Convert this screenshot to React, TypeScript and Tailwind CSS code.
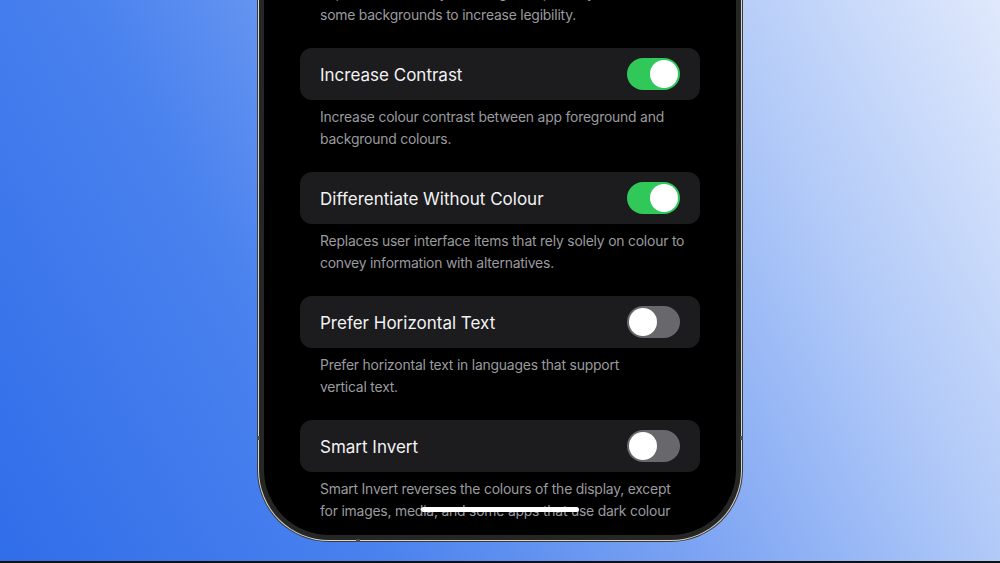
import { useState } from 'react'

type Row = {
  title: string
  footer: string[]
  on: boolean
}

const rows: Row[] = [
  {
    title: 'Increase Contrast',
    footer: ['Increase colour contrast between app foreground and', 'background colours.'],
    on: true
  },
  {
    title: 'Differentiate Without Colour',
    footer: ['Replaces user interface items that rely solely on colour to', 'convey information with alternatives.'],
    on: true
  },
  {
    title: 'Prefer Horizontal Text',
    footer: ['Prefer horizontal text in languages that support', 'vertical text.'],
    on: false
  },
  {
    title: 'Smart Invert',
    footer: ['Smart Invert reverses the colours of the display, except', 'for images, media, and some apps that use dark colour'],
    on: false
  }
]

function Toggle({ on, onChange }: { on: boolean; onChange: () => void }) {
  return (
    <button
      type="button"
      onClick={onChange}
      className={`flex h-[32px] w-[53px] shrink-0 items-center rounded-full p-[2px] ${on ? 'justify-end bg-[#31c85a]' : 'justify-start bg-[#67676c]'}`}
    >
      <span className="h-[28px] w-[28px] rounded-full bg-white" />
    </button>
  )
}

function Footer({ lines }: { lines: string[] }) {
  return (
    <div className="px-[20px] pt-[7px] text-[13.9px] leading-[21.5px] tracking-[-0.2px] text-[#9a9a9f]">
      {lines.map(line => (
        <p key={line} className="whitespace-nowrap">{line}</p>
      ))}
    </div>
  )
}

export default function App() {
  const [state, setState] = useState(rows.map(r => r.on))

  const flip = (i: number) => {
    setState(prev => prev.map((v, j) => (j === i ? !v : v)))
  }

  return (
    <div
      className="flex h-[563px] w-[1000px] flex-col overflow-hidden bg-[linear-gradient(62deg,#306de9_0%,#4a82ee_30%,#7ea5f3_55%,#b3cbf8_78%,#e0e9fc_100%)]"
      style={{ fontFamily: 'Inter, "Noto Sans", sans-serif' }}
    >
      <div className="flex flex-1 justify-center">
        {/* phone body: outline, steel edge, bezel */}
        <div className="relative -mt-[24px] h-[566px] w-[486px] rounded-b-[72px] bg-[#3b3b39] p-[1px]">
          <div className="h-full rounded-b-[71px] bg-[#d6d6cf] p-[1px]">
            <div className="h-full rounded-b-[70px] bg-[#262624] p-[5px]">
              <div className="relative h-full overflow-hidden rounded-b-[65px] bg-black px-[36px]">
                <div className="-mt-[7px]">
                  <Footer
                    lines={['Improve contrast by reducing transparency and blurs on', 'some backgrounds to increase legibility.']}
                  />

                  {rows.map((row, i) => (
                    <div key={row.title} className="mt-[22px]">
                      <div className="flex h-[52px] items-center justify-between rounded-[12px] bg-[#1c1c1e] px-[20px]">
                        <span className="pt-[3px] text-[17px] text-[#f2f2f4]">{row.title}</span>
                        <Toggle on={state[i]} onChange={() => flip(i)} />
                      </div>
                      <Footer lines={row.footer} />
                    </div>
                  ))}
                </div>

                {/* home indicator */}
                <div className="absolute bottom-[23px] left-1/2 h-[5px] w-[158px] -translate-x-1/2 rounded-full bg-white" />
              </div>
            </div>
          </div>

          {/* antenna bands */}
          <span className="absolute left-0 top-[460px] h-[4px] w-[3px] bg-[#4a4a48]" />
          <span className="absolute right-0 top-[460px] h-[4px] w-[3px] bg-[#4a4a48]" />
          <span className="absolute bottom-0 left-[99px] h-[3px] w-[4px] bg-[#4a4a48]" />
        </div>
      </div>
      <div className="h-[2px] bg-[#111]" />
    </div>
  )
}
